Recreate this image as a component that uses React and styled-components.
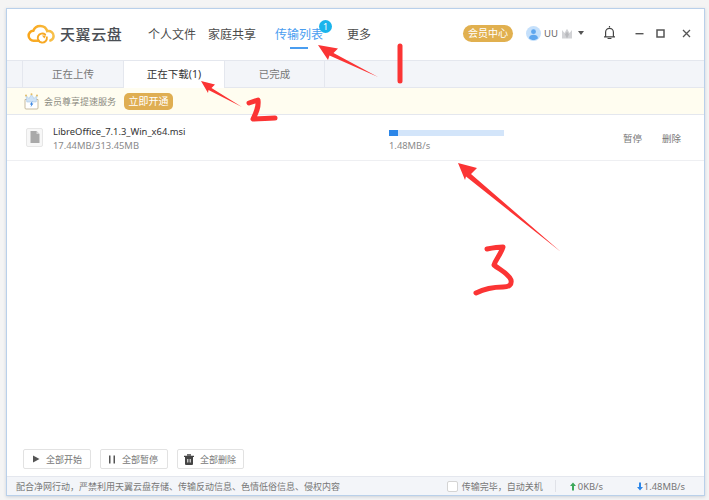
import React from "react";
import styled, { createGlobalStyle } from "styled-components";

const Global = createGlobalStyle`
  html, body { margin: 0; padding: 0; background: #f4f4f4; }
  body { font-family: "Noto Sans", "Noto Sans CJK SC", sans-serif; overflow: hidden; }
  * { box-sizing: border-box; }
`;

const Page = styled.div`
  position: relative;
  width: 709px;
  height: 500px;
  padding: 8px 4px 4px 6px;
`;

const Window = styled.div`
  width: 699px;
  height: 488px;
  display: flex;
  flex-direction: column;
  background: #fff;
  border: 1px solid #b9d0ea;
  box-shadow: 0 1px 3px rgba(90, 110, 140, 0.25);
`;

const Header = styled.header`
  height: 51px;
  flex: none;
  display: flex;
  align-items: center;
  padding-left: 20px;
`;

const Logo = styled.div`
  display: flex;
  align-items: center;
  gap: 4px;
  width: 121px;
  flex: none;
  margin-top: -2px;
`;

const LogoText = styled.span`
  font-size: 15px;
  font-weight: 500;
  letter-spacing: 0.6px;
  color: #4b4f55;
  white-space: nowrap;
`;

const NavItem = styled.div`
  position: relative;
  font-size: 12px;
  line-height: 52px;
  height: 51px;
  margin-left: ${(p) => p.$gap || 0}px;
  color: ${(p) => (p.$active ? "#4a9df0" : "#4c4c4c")};
  white-space: nowrap;
  &::after {
    content: "";
    display: ${(p) => (p.$active ? "block" : "none")};
    position: absolute;
    left: 15px;
    bottom: 11px;
    width: 18px;
    height: 2px;
    background: #4a9df0;
  }
`;

const Badge = styled.span`
  position: absolute;
  left: 44px;
  top: 11px;
  width: 13px;
  height: 13px;
  border-radius: 50%;
  background: #19b4ec;
  color: #fff;
  font-size: 9px;
  line-height: 13px;
  text-align: center;
`;

const HeaderRight = styled.div`
  margin-left: auto;
  display: flex;
  align-items: center;
  margin-top: -3px;
  padding-right: 13px;
`;

const VipPill = styled.div`
  width: 50px;
  height: 17px;
  border-radius: 9px;
  background: #e1b04f;
  color: #fff;
  font-size: 10px;
  line-height: 17px;
  text-align: center;
`;

const User = styled.div`
  display: flex;
  align-items: center;
  margin-left: 13px;
  margin-right: 19px;
  font-size: 9.5px;
  color: #666;
  gap: 3px;
`;

const Caret = styled.span`
  width: 0;
  height: 0;
  margin-left: 2px;
  border-left: 3px solid transparent;
  border-right: 3px solid transparent;
  border-top: 4px solid #555;
`;

const WinIcon = styled.span`
  display: flex;
  align-items: center;
  margin-left: ${(p) => p.$gap || 0}px;
`;

const Tabs = styled.nav`
  height: 28px;
  flex: none;
  display: flex;
  padding-left: 15px;
  background: #f3f5f9;
  border-top: 1px solid #e4e7ee;
  border-bottom: 1px solid #e4e7ee;
`;

const Tab = styled.div`
  width: 101px;
  height: ${(p) => (p.$active ? "27px" : "26px")};
  font-size: 10.5px;
  line-height: 27px;
  text-align: center;
  white-space: nowrap;
  color: ${(p) => (p.$active ? "#333" : "#777")};
  background: ${(p) => (p.$active ? "#fff" : "transparent")};
  border-left: 1px solid #e4e7ee;
  &:last-child {
    border-right: 1px solid #e4e7ee;
  }
`;

const Notice = styled.div`
  height: 27px;
  flex: none;
  display: flex;
  align-items: center;
  padding-left: 16px;
  background: #fffdf0;
  border-bottom: 1px solid #e4e7ee;
`;

const NoticeText = styled.span`
  margin-left: 4px;
  font-size: 9px;
  color: #8a8a80;
  white-space: nowrap;
`;

const OpenBtn = styled.div`
  margin-left: 8px;
  width: 49px;
  height: 17px;
  border-radius: 5px;
  background: #dfae52;
  color: #fff;
  font-size: 10px;
  line-height: 17px;
  text-align: center;
`;

const Row = styled.div`
  height: 46px;
  flex: none;
  display: flex;
  align-items: center;
  border-bottom: 1px solid #eeeff2;
  padding-left: 19px;
`;

const FileIcon = styled.div`
  width: 17px;
  height: 19px;
  flex: none;
  display: flex;
  align-items: center;
  justify-content: center;
  background: #f7f7f7;
  border: 1px solid #e6e6e6;
  border-radius: 2px;
  margin-top: -1px;
`;

const FileInfo = styled.div`
  width: 336px;
  flex: none;
  margin-left: 10px;
  margin-top: 3px;
`;

const FileName = styled.div`
  font-size: 9.4px;
  line-height: 14px;
  color: #333;
  white-space: nowrap;
`;

const FileSize = styled.div`
  font-size: 9.4px;
  line-height: 14px;
  color: #8a8a8a;
`;

const Progress = styled.div`
  width: 234px;
  flex: none;
  margin-top: 6px;
`;

const Track = styled.div`
  width: 115px;
  height: 6px;
  background: #d3e5fa;
`;

const Fill = styled.div`
  height: 100%;
  width: ${(p) => p.$pct}%;
  background: #2c86e8;
`;

const Speed = styled.div`
  margin-top: 3px;
  font-size: 9.4px;
  line-height: 13px;
  color: #8a8a8a;
`;

const RowAction = styled.span`
  font-size: 9.5px;
  color: #777;
  margin-right: 20px;
  white-space: nowrap;
`;

const Spacer = styled.div`
  flex: 1;
`;

const Toolbar = styled.div`
  flex: none;
  display: flex;
  gap: 9px;
  padding: 0 0 7px 16px;
`;

const ToolBtn = styled.div`
  width: ${(p) => p.$w}px;
  height: 20px;
  display: flex;
  align-items: center;
  padding-left: ${(p) => p.$pad}px;
  gap: 6px;
  border: 1px solid #e2e2e2;
  border-radius: 2px;
  background: #fff;
  font-size: 9px;
  color: #777;
  white-space: nowrap;
`;

const Status = styled.footer`
  height: 19px;
  flex: none;
  display: flex;
  align-items: center;
  padding-left: 9px;
  background: #f3f5f9;
  border-top: 1px solid #e4e7ee;
  font-size: 9px;
  color: #777;
  white-space: nowrap;
`;

const StatusRight = styled.div`
  margin-left: auto;
  display: flex;
  align-items: center;
  padding-right: 19px;
`;

const Check = styled.span`
  width: 11px;
  height: 11px;
  background: #fff;
  border: 1px solid #d4d4d4;
  border-radius: 2px;
  margin-right: 4px;
`;

const Divider = styled.span`
  width: 1px;
  height: 12px;
  background: #e0e2e8;
  margin: 0 14px 0 12px;
`;

const Rate = styled.span`
  display: flex;
  align-items: center;
  gap: ${(p) => p.$gap}px;
  width: ${(p) => p.$w}px;
  font-size: 9.4px;
`;

// hand drawn marks on top of the screenshot
const Overlay = styled.svg`
  position: absolute;
  left: 0;
  top: 0;
  pointer-events: none;
`;

const CloudLogo = () => (
  <svg width="29" height="20" viewBox="0 0 30 21">
    <defs>
      <linearGradient id="cloudGrad" x1="0" y1="0" x2="1" y2="0">
        <stop offset="0" stopColor="#f9a51a" />
        <stop offset="1" stopColor="#f7c04a" />
      </linearGradient>
    </defs>
    <path
      d="M12 17.5H7a5.2 5.2 0 0 1-.6-10.4C7.6 3.7 10.6 2 13.6 2c3.6 0 6.5 2.300 7.400 5.500a5.200 5.200 0 0 1 6.700 5c0 2.300-1.400 4.100-3.400 4.800"
      fill="none"
      stroke="url(#cloudGrad)"
      strokeWidth="2.6"
      strokeLinecap="round"
    />
    <path
      d="M21.600 12.500a4.800 4.800 0 1 1-1.700-3"
      fill="none"
      stroke="#f7a823"
      strokeWidth="2"
      strokeLinecap="round"
      transform="translate(-1 1.500)"
    />
    <path d="M15.500 12l4.300.2-1.800 3z" fill="#f7a823" />
  </svg>
);

const Avatar = () => (
  <svg width="15" height="15" viewBox="0 0 16 16">
    <circle cx="8" cy="8" r="8" fill="#c5e0fb" />
    <circle cx="8" cy="6" r="2.600" fill="#5ea6ee" />
    <path d="M3.200 13c.3-2.600 2.300-3.600 4.800-3.600s4.500 1 4.800 3.600c-1.300 1.300-3 1.900-4.800 1.900s-3.500-.6-4.800-1.900z" fill="#5ea6ee" />
  </svg>
);

const GreyCrown = () => (
  <svg width="12" height="11" viewBox="0 0 12 11">
    <path d="M1 2l2.500 3L6 .8 8.500 5 11 2v8.500H1z" fill="#d2d3d6" />
    <path d="M6 3.500l2 3-2 4-2-4z" fill="#b9babd" />
  </svg>
);

const Bell = () => (
  <svg width="13" height="14" viewBox="0 0 13 14" fill="none" stroke="#444" strokeWidth="1.200">
    <path d="M1 10.800h11M2.600 10.500V6.300a3.900 3.900 0 0 1 7.800 0v4.200" />
    <path d="M6.500 1V.4M5 12.500h3" strokeLinecap="round" />
  </svg>
);

const Minimize = () => (
  <svg width="9" height="9" viewBox="0 0 9 9">
    <rect x="0.500" y="4" width="8" height="1.400" fill="#555" />
  </svg>
);

const Maximize = () => (
  <svg width="9" height="9" viewBox="0 0 9 9" fill="none">
    <rect x="1" y="1" width="7" height="7" stroke="#555" strokeWidth="1.500" />
  </svg>
);

const Close = () => (
  <svg width="9" height="9" viewBox="0 0 9 9" fill="none">
    <path d="M1 1l7 7M8 1L1 8" stroke="#555" strokeWidth="1.300" />
  </svg>
);

const VipCrown = () => (
  <svg width="17" height="17" viewBox="0 0 17 17">
    <path d="M2 6.500h13v8.500a1 1 0 0 1-1 1H3a1 1 0 0 1-1-1z" fill="#fff" stroke="#b9a98a" strokeWidth="0.800" />
    <path d="M3 2.500l3 3L8.500 1.500 11 5.500l3-3-.8 6.500H3.800z" fill="#cfe3f7" stroke="#a9c7e6" strokeWidth="0.600" />
    <circle cx="3" cy="2.500" r="1" fill="#e3bd68" />
    <circle cx="14" cy="2.500" r="1" fill="#e3bd68" />
    <circle cx="8.500" cy="1.200" r="1" fill="#e3bd68" />
    <path d="M9.500 8L6.800 11.500h1.600l-.8 2.700 2.800-3.700H8.800z" fill="#2f7fe0" />
  </svg>
);

const Doc = () => (
  <svg width="10" height="12" viewBox="0 0 10 12">
    <path d="M0.500 0h6l3 3v9h-9z" fill="#a9a9a9" />
    <path d="M6.500 0v3h3z" fill="#d6d6d6" />
  </svg>
);

const Play = () => (
  <svg width="8" height="8" viewBox="0 0 8 8">
    <path d="M1 .5l6.500 3.500L1 7.500z" fill="#555" />
  </svg>
);

const Pause = () => (
  <svg width="8" height="9" viewBox="0 0 8 9">
    <path d="M1 .5h1.500v8H1zM5.500 .5H7v8H5.500z" fill="#555" />
  </svg>
);

const Trash = () => (
  <svg width="10" height="11" viewBox="0 0 10 11">
    <path d="M0 1.800h10v1.200H0zM3 .2h4v1.200H3z" fill="#444" />
    <path d="M1 3h8v7a1 1 0 0 1-1 1H2a1 1 0 0 1-1-1z" fill="#444" />
    <path d="M3.300 5h1v3.600h-1zM5.700 5h1v3.600h-1z" fill="#fff" />
  </svg>
);

const UpArrow = () => (
  <svg width="6" height="9" viewBox="0 0 6 9">
    <path d="M3 .5L6 4H4v4.500H2V4H0z" fill="#3da85a" />
  </svg>
);

const DownArrow = () => (
  <svg width="6" height="9" viewBox="0 0 6 9">
    <path d="M3 8.500L6 5H4V.5H2V5H0z" fill="#2c86e8" />
  </svg>
);

const Marks = () => (
  <Overlay width="709" height="500" viewBox="0 0 709 500">
    <g fill="#fb3434">
      <path d="M318 45L338 48.500L333.500 53L378 77L329.500 55.500L328 60z" />
      <path d="M201 81L215 84.500L211.500 88L242 107L208.500 90L208 93z" />
      <path d="M458 163L477 168L471 174L561 252L466 176.500L465 180z" />
    </g>
    <g fill="none" stroke="#fb3434" strokeWidth="5" strokeLinecap="round" strokeLinejoin="round">
      <path d="M400 46L400 81" />
      <path d="M249 103L258 100C259 107 256 113 253 119C261 119 268 118 275 118" />
      <path d="M487 249C492 248 498 247 503 247C501 254 496 259 494 265C500 270 508 273 511 280C512 285 509 287 503 287C494 287 484 289 476 293" />
    </g>
  </Overlay>
);

const App = () => (
  <Page>
    <Global />
    <Window>
      <Header>
        <Logo>
          <CloudLogo />
          <LogoText>天翼云盘</LogoText>
        </Logo>
        <NavItem>个人文件</NavItem>
        <NavItem $gap={12}>家庭共享</NavItem>
        <NavItem $gap={19} $active>
          传输列表
          <Badge>1</Badge>
        </NavItem>
        <NavItem $gap={24}>更多</NavItem>
        <HeaderRight>
          <VipPill>会员中心</VipPill>
          <User>
            <Avatar />
            <span>UU</span>
            <GreyCrown />
            <Caret />
          </User>
          <WinIcon>
            <Bell />
          </WinIcon>
          <WinIcon $gap={19}>
            <Minimize />
          </WinIcon>
          <WinIcon $gap={12}>
            <Maximize />
          </WinIcon>
          <WinIcon $gap={17}>
            <Close />
          </WinIcon>
        </HeaderRight>
      </Header>
      <Tabs>
        <Tab>正在上传</Tab>
        <Tab $active>正在下载(1)</Tab>
        <Tab>已完成</Tab>
      </Tabs>
      <Notice>
        <VipCrown />
        <NoticeText>会员尊享提速服务</NoticeText>
        <OpenBtn>立即开通</OpenBtn>
      </Notice>
      <Row>
        <FileIcon>
          <Doc />
        </FileIcon>
        <FileInfo>
          <FileName>LibreOffice_7.1.3_Win_x64.msi</FileName>
          <FileSize>17.44MB/313.45MB</FileSize>
        </FileInfo>
        <Progress>
          <Track>
            <Fill $pct={8.2} />
          </Track>
          <Speed>1.48MB/s</Speed>
        </Progress>
        <RowAction>暂停</RowAction>
        <RowAction>删除</RowAction>
      </Row>
      <Spacer />
      <Toolbar>
        <ToolBtn $w={68} $pad={8}>
          <Play />
          全部开始
        </ToolBtn>
        <ToolBtn $w={68} $pad={7}>
          <Pause />
          全部暂停
        </ToolBtn>
        <ToolBtn $w={67} $pad={6}>
          <Trash />
          全部删除
        </ToolBtn>
      </Toolbar>
      <Status>
        配合净网行动，严禁利用天翼云盘存储、传输反动信息、色情低俗信息、侵权内容
        <StatusRight>
          <Check />
          传输完毕，自动关机
          <Divider />
          <Rate $w={67} $gap={2}>
            <UpArrow />
            0KB/s
          </Rate>
          <Rate $gap={1}>
            <DownArrow />
            1.48MB/s
          </Rate>
        </StatusRight>
      </Status>
    </Window>
    <Marks />
  </Page>
);

export default App;
